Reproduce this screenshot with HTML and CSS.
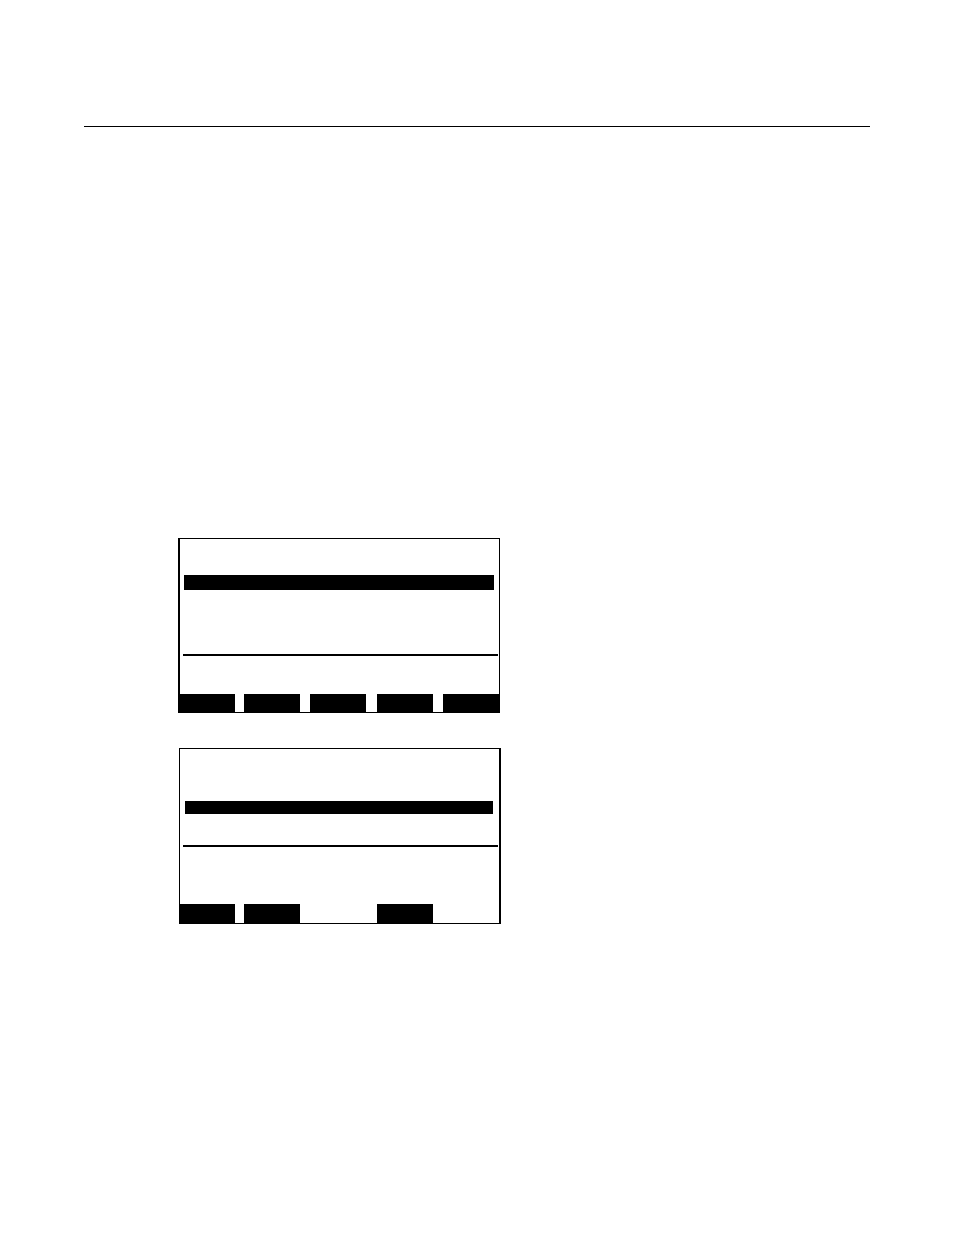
FILE: index.html
```html
<!DOCTYPE html>
<html lang="en">
<head>
<meta charset="utf-8">
<meta name="viewport" content="width=device-width, initial-scale=1">
<title>Display screens</title>
<link rel="stylesheet" href="styles.css">
</head>
<body>
<header class="page-header"></header>
<main class="screens">
  <section class="screen screen-list">
    <div class="selected-row"></div>
    <hr class="divider">
    <div class="softkeys">
      <button class="softkey" type="button" aria-label="F1"></button>
      <button class="softkey" type="button" aria-label="F2"></button>
      <button class="softkey" type="button" aria-label="F3"></button>
      <button class="softkey" type="button" aria-label="F4"></button>
      <button class="softkey" type="button" aria-label="F5"></button>
    </div>
  </section>
  <section class="screen screen-detail">
    <div class="selected-row"></div>
    <hr class="divider">
    <div class="softkeys">
      <button class="softkey" type="button" aria-label="F1"></button>
      <button class="softkey" type="button" aria-label="F2"></button>
      <button class="softkey softkey-fourth" type="button" aria-label="F4"></button>
    </div>
  </section>
</main>
</body>
</html>
```
FILE: styles.css
```css
* {
  box-sizing: border-box;
}

body {
  margin: 0;
  padding: 126px 84px;
  background: #fff;
  color: #000;
  font-family: "Liberation Sans", Arial, sans-serif;
}

.page-header {
  border-top: 1px solid #000;
}

.screens {
  display: flex;
  flex-direction: column;
  gap: 35px;
  padding: 411px 0 0 94px;
}

.screen {
  width: 100%;
  max-width: 322px;
  border: 1px solid #000;
}

.screen-list {
  border-left-width: 2px;
}

.screen-detail {
  margin-left: 1px;
  border-right-width: 2px;
}

.selected-row {
  background: #000;
}

.screen-list .selected-row {
  height: 15px;
  margin: 36px 5px 0 4px;
}

.screen-detail .selected-row {
  height: 13px;
  margin: 52px 6px 0 5px;
}

.divider {
  height: 2px;
  border: 0;
  background: #000;
}

.screen-list .divider {
  margin: 64px 1px 38px 3px;
}

.screen-detail .divider {
  margin: 31px 1px 57px 3px;
}

.softkeys {
  display: grid;
  grid-template-columns: 55fr 57fr 58fr 57fr 56fr;
  column-gap: 9px;
}

.softkey {
  width: 100%;
  max-width: 56px;
  height: 18px;
  padding: 0;
  border: 0;
  border-radius: 0;
  background: #000;
}

.screen-detail .softkey {
  height: 19px;
}

.softkey-fourth {
  grid-column: 4;
}
```
